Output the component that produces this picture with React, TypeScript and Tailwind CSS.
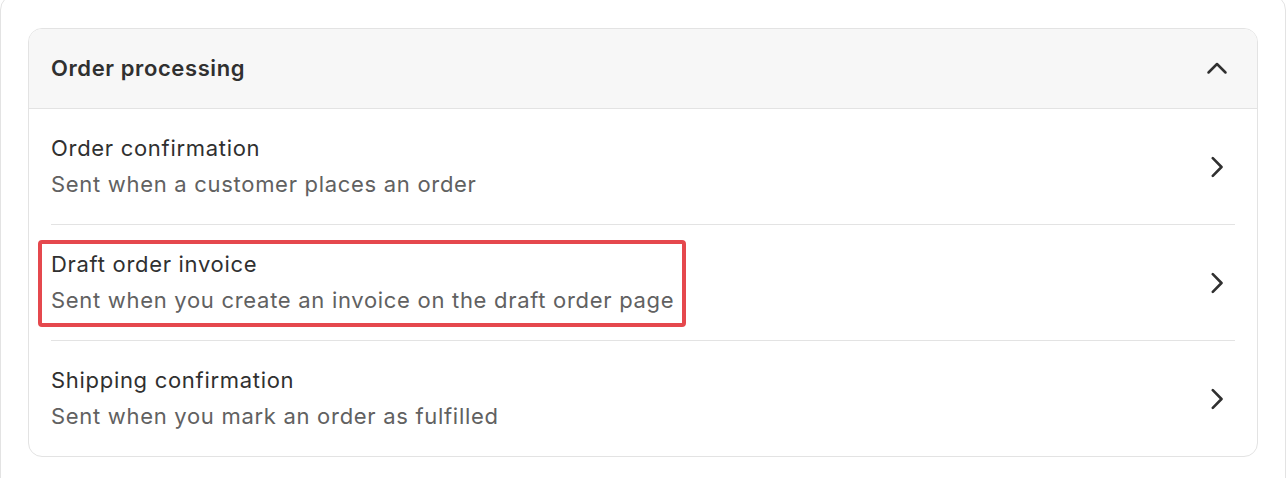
import React from "react";

const rows = [
  { title: "Order confirmation", sub: "Sent when a customer places an order", hl: false },
  { title: "Draft order invoice", sub: "Sent when you create an invoice on the draft order page", hl: true },
  { title: "Shipping confirmation", sub: "Sent when you mark an order as fulfilled", hl: false },
];

function ChevronRight() {
  return (
    <svg width="12" height="22" viewBox="0 0 12 22" fill="none">
      <path d="M1.8 2.2 10.5 11l-8.7 8.8" stroke="#303030" strokeWidth="2.6" strokeLinecap="round" strokeLinejoin="round" />
    </svg>
  );
}

function ChevronUp() {
  return (
    <svg width="22" height="14" viewBox="0 0 22 14" fill="none">
      <path d="M2.5 11.5 11 3l8.5 8.5" stroke="#303030" strokeWidth="2.5" strokeLinecap="round" strokeLinejoin="round" />
    </svg>
  );
}

export default function App() {
  return (
    <div className="w-[1286px] h-[478px] overflow-hidden bg-white" style={{ fontFamily: "Inter, 'Noto Sans', sans-serif" }}>
      <div className="mt-[-6px] h-[520px] rounded-[16px] border border-[#e3e3e3] bg-white pt-[33px] px-[27px]">
        <div className="rounded-[14px] border border-[#e3e3e3] overflow-hidden">
          <div className="h-[80px] bg-[#f7f7f7] border-b border-[#e3e3e3] flex items-center justify-between pl-[22px] pr-[29px] pb-[1px]">
            <span className="text-[22px] font-semibold text-[#303030] tracking-[0.6px]">Order processing</span>
            <ChevronUp />
          </div>
          <div className="px-[22px]">
            {rows.map((r, i) => (
              <div key={r.title} className={"flex items-center justify-between " + (i < rows.length - 1 ? "h-[116px] border-b border-[#e3e3e3]" : "h-[115px]")}>
                <div className="relative flex flex-col tracking-[0.7px] mb-[2px]">
                  <span className="text-[22px] leading-[36px] text-[#303030]">{r.title}</span>
                  <span className="text-[22px] leading-[36px] text-[#616161]">{r.sub}</span>
                  {r.hl && (
                    <div className="absolute left-[-13px] right-[-12px] top-[-6px] bottom-[-9px] border-[4px] border-[#e5484d] rounded-[4px] pointer-events-none" />
                  )}
                </div>
                <div className="pr-[12px] flex items-center">
                  <ChevronRight />
                </div>
              </div>
            ))}
          </div>
        </div>
      </div>
    </div>
  );
}
